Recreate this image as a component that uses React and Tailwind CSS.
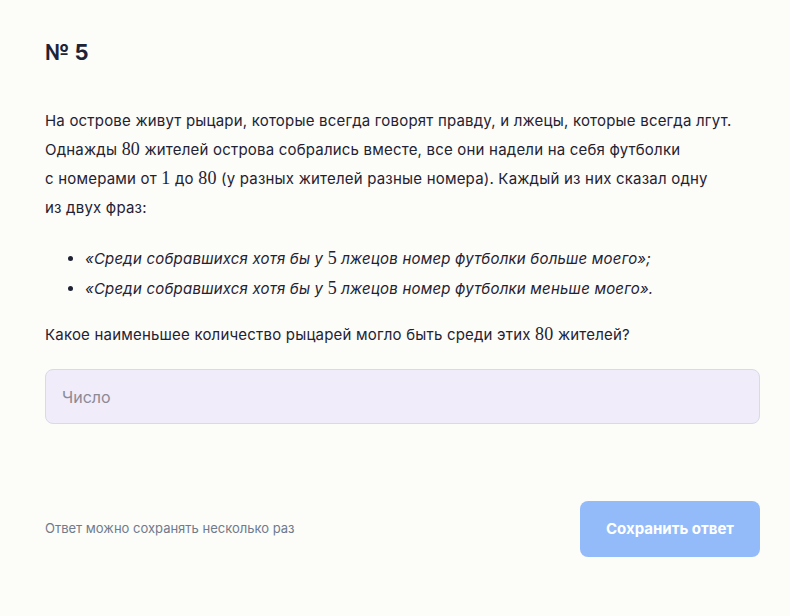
import React from 'react';

const N = ({ children }) => (
  <span className="font-['Liberation_Serif',serif] text-[18px] not-italic leading-none">{children}</span>
);

const App = () => {
  return (
    <div className="min-h-screen w-full bg-[#fcfcf8] font-['Inter',sans-serif] text-[#1f2233]">
      <div className="pl-[45px] pr-[30px] pt-[38px]">
        <h1 className="text-[22px] font-bold leading-[28px] text-[#1e2438]">№ 5</h1>

        <div className="tracking-[0.2px]">
          <p className="mt-[40px] text-[15px] leading-[29px]">
            На острове живут рыцари, которые всегда говорят правду, и лжецы, которые всегда лгут.
            <br />
            Однажды <N>80</N> жителей острова собрались вместе, все они надели на себя футболки
            <br />
            с номерами от <N>1</N> до <N>80</N> (у разных жителей разные номера). Каждый из них сказал одну
            <br />
            из двух фраз:
          </p>

          <ul className="mt-[22px] list-disc pl-[40px] text-[15px] italic leading-[30px] marker:text-[#1f2233]">
            <li>«Среди собравшихся хотя бы у <N>5</N> лжецов номер футболки больше моего»;</li>
            <li>«Среди собравшихся хотя бы у <N>5</N> лжецов номер футболки меньше моего».</li>
          </ul>

          <p className="mt-[16px] text-[15px] leading-[29px]">
            Какое наименьшее количество рыцарей могло быть среди этих <N>80</N> жителей?
          </p>
        </div>

        <input
          type="text"
          placeholder="Число"
          className="mt-[20px] h-[55px] w-full rounded-[8px] border border-[#d9dae8] bg-[#f0ecf9] px-[16px] text-[16px] text-[#1f2233] outline-none placeholder:text-[#8b8a95]"
        />

        <div className="mt-[77px] flex items-center justify-between">
          <span className="text-[13px] text-[#6f7a8c]">Ответ можно сохранять несколько раз</span>
          <button className="h-[56px] w-[180px] rounded-[8px] bg-[#93bbfa] text-[15px] font-bold text-white">
            Сохранить ответ
          </button>
        </div>
      </div>
    </div>
  );
};

export default App;
